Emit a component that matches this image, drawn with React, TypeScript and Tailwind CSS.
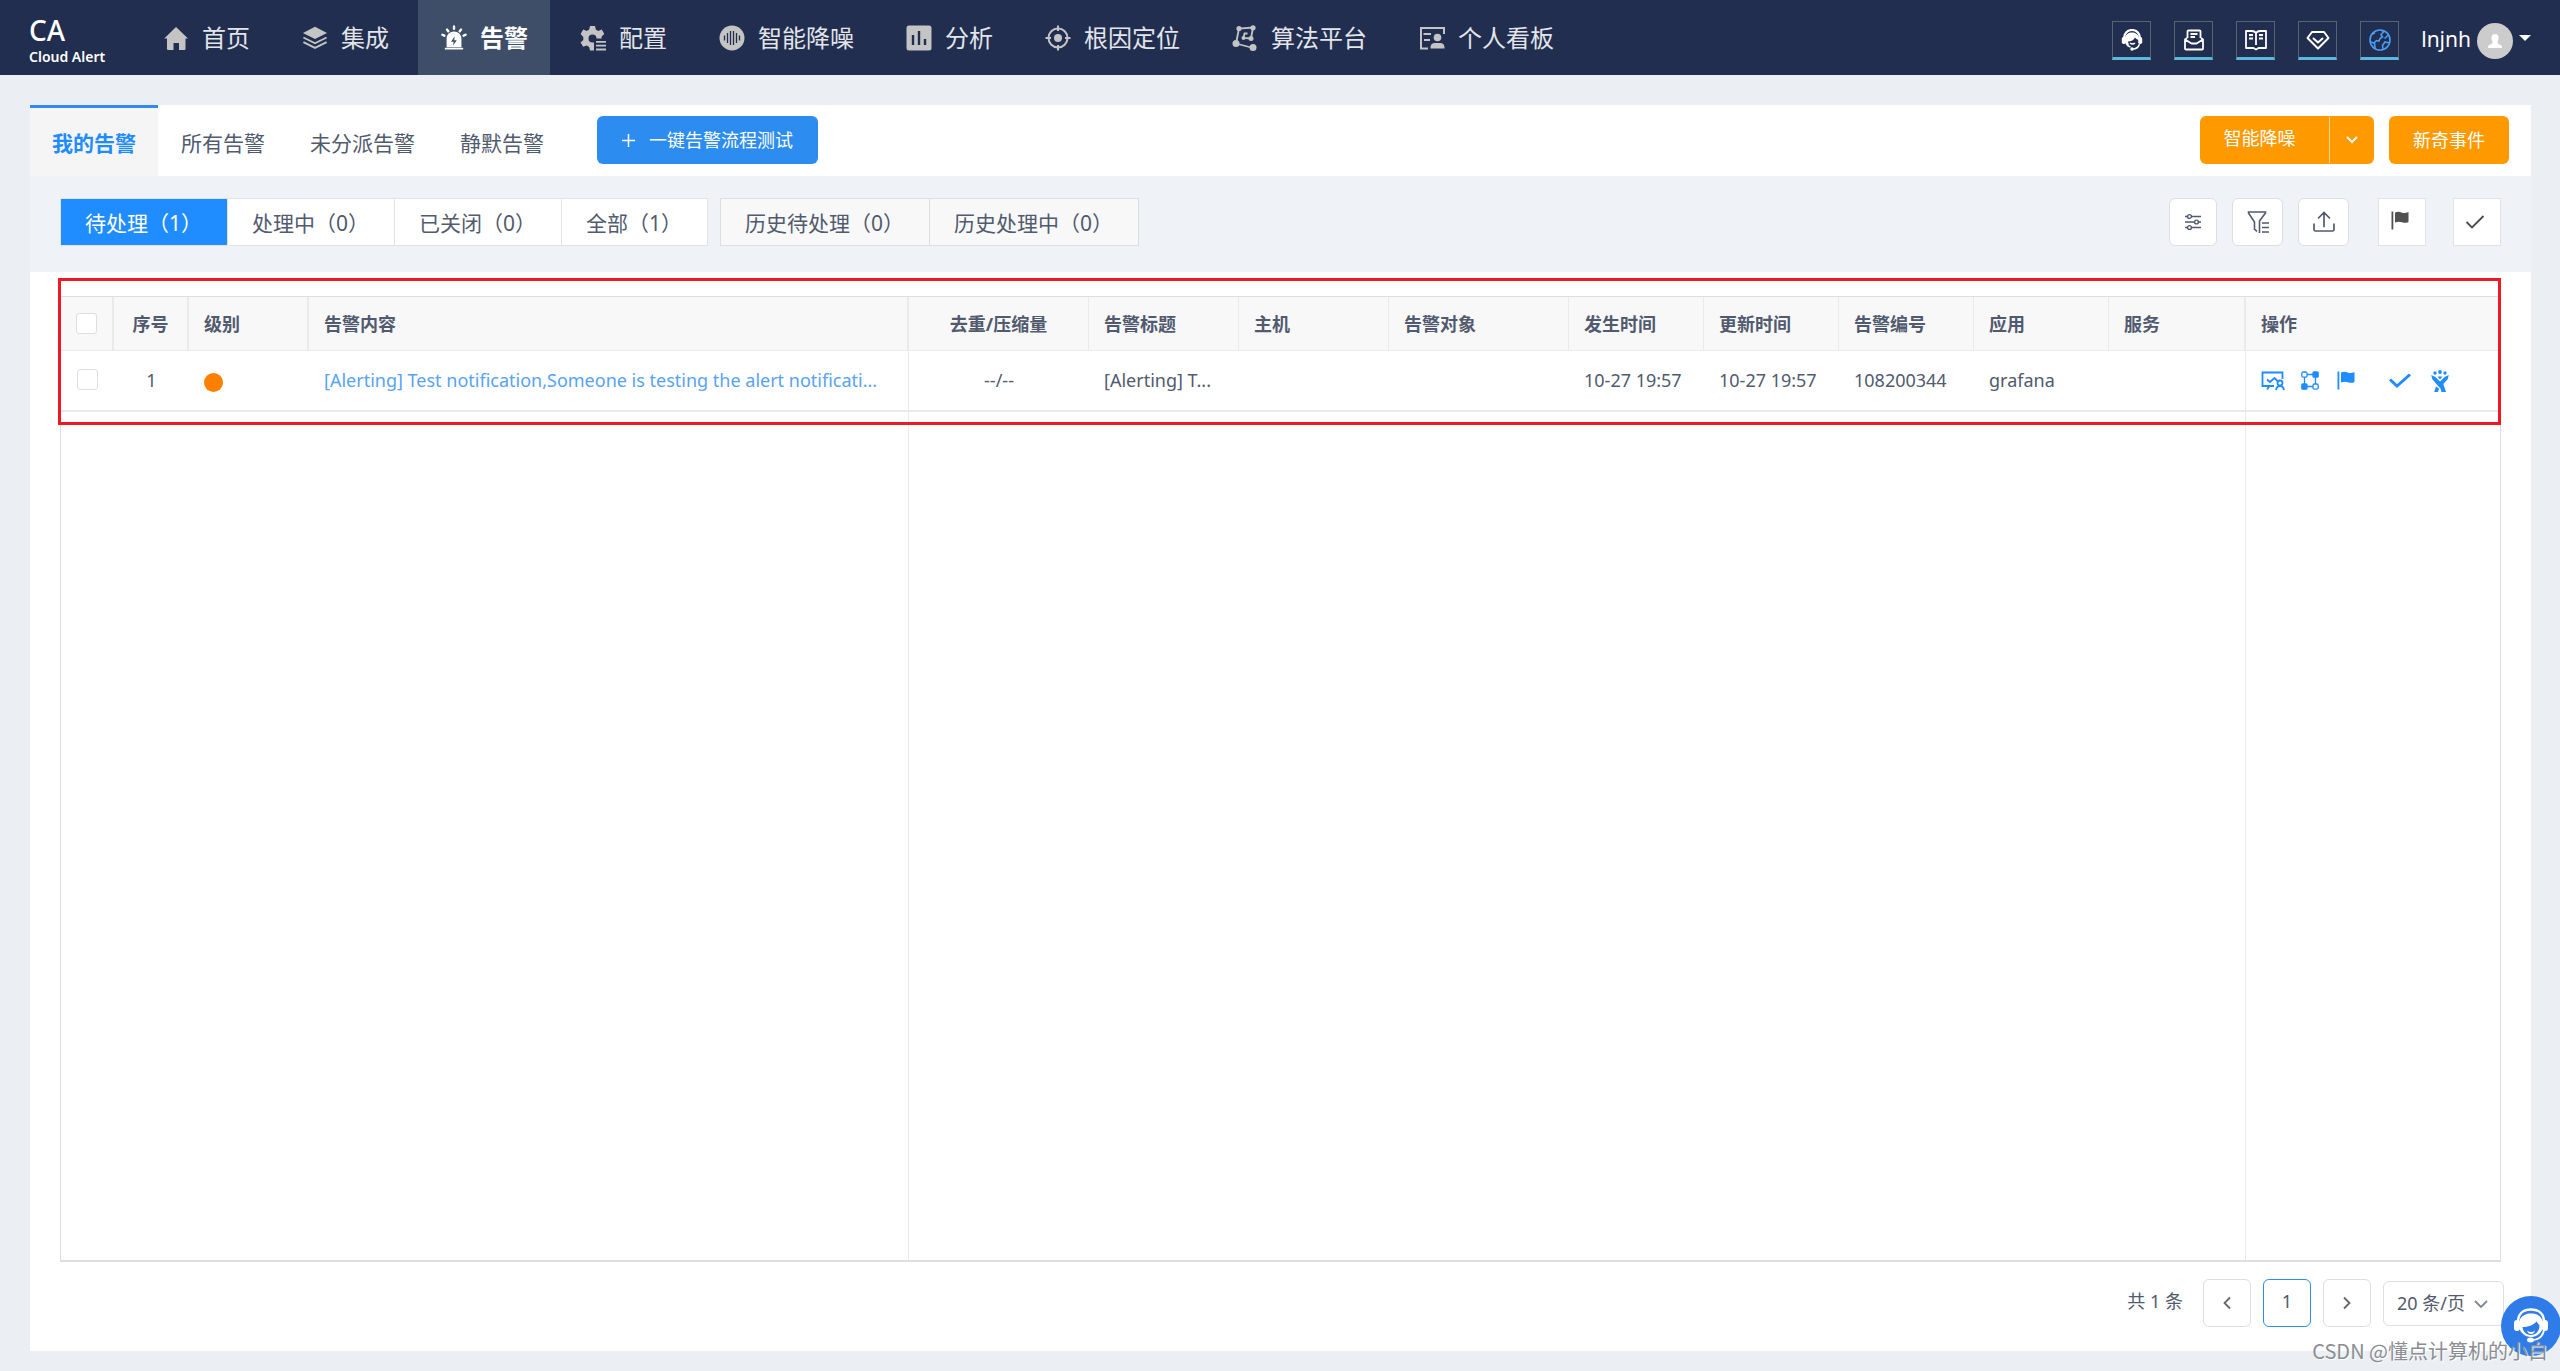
import type { ReactNode } from 'react';

interface NavItem {
  label: string;
  icon: ReactNode;
  active?: boolean;
}

interface Column {
  title: string;
  width: string;
  align?: string;
  border?: string;
}

const navItems: NavItem[] = [
  { label: '首页', icon: <HomeIcon /> },
  { label: '集成', icon: <LayersIcon /> },
  { label: '告警', icon: <SirenIcon />, active: true },
  { label: '配置', icon: <GearIcon /> },
  { label: '智能降噪', icon: <NoiseIcon /> },
  { label: '分析', icon: <ChartIcon /> },
  { label: '根因定位', icon: <TargetIcon /> },
  { label: '算法平台', icon: <AlgorithmIcon /> },
  { label: '个人看板', icon: <BoardIcon /> },
];

const tools = [
  { label: '在线客服', icon: <ServiceIcon /> },
  { label: '消息', icon: <MailIcon /> },
  { label: '文档', icon: <BookIcon /> },
  { label: '会员', icon: <DiamondIcon /> },
  { label: '语言', icon: <GlobeIcon /> },
];

const tabs = ['我的告警', '所有告警', '未分派告警', '静默告警'];
const filters = ['待处理（1）', '处理中（0）', '已关闭（0）', '全部（1）'];
const historyFilters = ['历史待处理（0）', '历史处理中（0）'];

const columns: Column[] = [
  { title: '序号', width: 'w-[75px]', align: 'text-center', border: 'border-r-2' },
  { title: '级别', width: 'w-[120px]', border: 'border-r-2' },
  { title: '告警内容', width: 'w-[600px]', border: 'border-r-2' },
  { title: '去重/压缩量', width: 'w-[180px]', align: 'text-center' },
  { title: '告警标题', width: 'w-[150px]' },
  { title: '主机', width: 'w-[150px]' },
  { title: '告警对象', width: 'w-[180px]' },
  { title: '发生时间', width: 'w-[135px]' },
  { title: '更新时间', width: 'w-[135px]' },
  { title: '告警编号', width: 'w-[135px]' },
  { title: '应用', width: 'w-[135px]' },
  { title: '服务', width: '', border: 'border-r-2' },
  { title: '操作', width: 'w-[254px]', border: 'border-r-0' },
];

/* ---- header icons ---- */

function HomeIcon() {
  return (
    <svg width="26" height="26" viewBox="0 0 26 26" fill="currentColor">
      <path d="M13 2 L25 13.5 H22.5 V24 a1 1 0 0 1-1 1 H16 V18 H10.500 V25 H5 a1 1 0 0 1-1-1 V13.500 H1.200 Z" />
    </svg>
  );
}

function LayersIcon() {
  return (
    <svg width="28" height="26" viewBox="0 0 28 26" fill="none" stroke="currentColor" strokeWidth="2">
      <path d="M14 1 L27 7.500 L14 14 L1 7.500 Z" fill="currentColor" stroke="none" />
      <path d="M1.500 12.500 L14 18.700 L26.500 12.500" />
      <path d="M1.500 17.500 L14 23.700 L26.500 17.500" />
    </svg>
  );
}

function SirenIcon() {
  return (
    <svg width="28" height="28" viewBox="0 0 28 28" fill="none" stroke="currentColor" strokeWidth="2.600" strokeLinecap="round">
      <path d="M6 24 V14.500 a8 7.500 0 0 1 16 0 V24 Z" fill="currentColor" stroke="none" />
      <path d="M5 25.500 H23" strokeWidth="2" />
      <path d="M14 1.500 V4 M6.500 5 L7.800 6.800 M21.500 5 L20.200 6.800 M1.500 10.500 L3.600 11.500 M26.500 10.500 L24.400 11.500" />
      <path d="M14.800 12 L10.800 18 H13.600 L13 22 L17 16.500 H14.200 Z" fill="#3e4e68" stroke="none" />
    </svg>
  );
}

function GearIcon() {
  return (
    <svg width="26" height="26" viewBox="0 0 26 26" fill="currentColor">
      <path
        fillRule="evenodd"
        d="M10 1 h5 l.8 3.600 2.400 1.300 3.500-1.300 2.600 4.300-2.700 2.600 v2 H16.500 a4 4 0 1 0-4 4 H14 V25.500 h-4 l-.8-3.500-2.500-1.400-3.500 1.200-2.600-4.300 2.700-2.500 v-3 L.6 8.900 3.200 4.600 6.800 5.900 9.200 4.600 Z"
      />
      <path d="M16 16 H26 V17.800 H16 Z M16 19.800 H26 V21.600 H16 Z M16 23.600 H26 V25.400 H16 Z" />
    </svg>
  );
}

function NoiseIcon() {
  return (
    <svg width="26" height="26" viewBox="0 0 26 26">
      <circle cx="13" cy="13" r="12.500" fill="currentColor" />
      <path d="M5.500 10.500 V15.500 M8.500 8 V18 M11.500 6 V20 M14.500 6 V20 M17.500 8 V18 M20.500 10.500 V15.500" stroke="#212e4f" strokeWidth="1.300" />
    </svg>
  );
}

function ChartIcon() {
  return (
    <svg width="26" height="26" viewBox="0 0 26 26">
      <rect x="0.500" y="0.500" width="25" height="25" rx="2.500" fill="currentColor" />
      <path d="M7 10 V20 M13 6 V20 M19 14 V20" stroke="#212e4f" strokeWidth="2.400" />
    </svg>
  );
}

function TargetIcon() {
  return (
    <svg width="26" height="26" viewBox="0 0 26 26" fill="none" stroke="currentColor" strokeWidth="2">
      <circle cx="13" cy="13" r="9.500" />
      <circle cx="13" cy="13" r="4" fill="currentColor" stroke="none" />
      <path d="M13 .5 V6 M13 20 V25.500 M.5 13 H6 M20 13 H25.500" />
    </svg>
  );
}

function AlgorithmIcon() {
  return (
    <svg width="26" height="26" viewBox="0 0 26 26" fill="none" stroke="currentColor" strokeWidth="1.800">
      <path d="M4 18.500 L7 3.500 L21 2.500 L19 13.500 L11.500 13 L12.500 8.500 L15.500 8.500 M4 18.500 L21 23" />
      <g fill="currentColor" stroke="none">
        <circle cx="4" cy="18.500" r="3.500" />
        <circle cx="21" cy="22.500" r="3.500" />
        <circle cx="7" cy="3.500" r="2.600" />
        <circle cx="21" cy="2.800" r="2.600" />
        <circle cx="19" cy="13.500" r="2.500" />
        <circle cx="11.500" cy="13" r="2" />
      </g>
    </svg>
  );
}

function BoardIcon() {
  return (
    <svg width="26" height="26" viewBox="0 0 26 26" fill="none" stroke="currentColor" strokeWidth="2">
      <path d="M25 9 V3 H2 V23.500 H9 M4.500 9 H12 M5 15 H11" />
      <circle cx="18.500" cy="12.500" r="3.800" fill="currentColor" stroke="none" />
      <path d="M11.500 23.500 v-1.500 a4.500 4.500 0 0 1 4.500-4 h5 a4.500 4.500 0 0 1 4.500 4 v1.500 Z" fill="currentColor" stroke="none" />
    </svg>
  );
}

function ServiceIcon() {
  return (
    <svg width="22" height="22" viewBox="0 0 22 22" fill="none" stroke="currentColor">
      <path d="M3 9 a8 8 0 0 1 16 0" strokeWidth="2.200" />
      <path d="M3.500 11 C4 5 8 3.500 11 3.500 s7 1.500 7.500 7.500 c-2 0-3.500-1-4.500-2.500 C12.500 11.500 9.500 12.500 7 12.500 L8 16.500 C5 15.500 3.500 13.500 3.500 11 Z" fill="currentColor" stroke="none" />
      <rect x="0.800" y="8" width="4" height="7" rx="1.800" fill="currentColor" stroke="none" />
      <rect x="17.200" y="8" width="4" height="7" rx="1.800" fill="currentColor" stroke="none" />
      <path d="M5 14 a6.500 6.500 0 0 0 4.500 4 M9 14 q2.500 2 5 0 M18.500 15 q-1.500 5-7 5" strokeWidth="1.500" />
      <circle cx="11" cy="20" r="1.700" fill="currentColor" stroke="none" />
    </svg>
  );
}

function MailIcon() {
  return (
    <svg width="22" height="22" viewBox="0 0 22 22" fill="none" stroke="currentColor" strokeWidth="1.800" strokeLinejoin="round">
      <path d="M4.500 9 V2.500 a1 1 0 0 1 1-1 H16.500 a1 1 0 0 1 1 1 V9 M7.500 5 H14.500 M7.500 8 H12" />
      <path d="M4 9 L2 10.500 V19.500 a1 1 0 0 0 1 1 H19 a1 1 0 0 0 1-1 V10.500 L18 9 M2 10.500 L8.500 14.500 H13.500 L20 10.500" />
    </svg>
  );
}

function BookIcon() {
  return (
    <svg width="24" height="22" viewBox="0 0 24 22" fill="none" stroke="currentColor" strokeWidth="1.800" strokeLinejoin="round">
      <path d="M12 4 C11 2.500 9.500 2 8 2 H2 V19 H9.500 L12 20.500 L14.500 19 H22 V2 H16 C14.500 2 13 2.500 12 4 Z M12 4 V16" />
      <path d="M5 6 H9 M5 9.500 H9 M15 6 H19 M15 9.500 H19" />
    </svg>
  );
}

function DiamondIcon() {
  return (
    <svg width="24" height="22" viewBox="0 0 24 22" fill="none" stroke="currentColor" strokeWidth="2" strokeLinejoin="round" strokeLinecap="round">
      <path d="M6 3 H18 L22.500 9 L12 19.500 L1.500 9 Z" />
      <path d="M7.500 9.500 L12 13.500 L16.500 9.500" />
    </svg>
  );
}

function GlobeIcon() {
  return (
    <svg width="22" height="22" viewBox="0 0 22 22" fill="none" stroke="#4a9cf5" strokeWidth="1.600">
      <circle cx="11" cy="11" r="10" />
      <path d="M13 1.500 L14.500 3 L12 5.500 L13.500 8 L11 9.500 L10 12 L7.500 11.500 L5 14 L1.500 13 M3 5 L6 4 M19.500 6 L15.500 9.500 M20.500 14 L16 13 L13.500 16.500 L14 20 M5.500 14 L6 19" />
    </svg>
  );
}

/* ---- toolbar icons ---- */

function SlidersIcon() {
  return (
    <svg width="18" height="18" viewBox="0 0 18 18" fill="none" stroke="#515a6e" strokeWidth="1.400">
      <path d="M1 3.500 H3.500 M7.500 3.500 H17 M1 9 H10.500 M14.500 9 H17 M1 14.500 H3.500 M7.500 14.500 H17" />
      <circle cx="5.500" cy="3.500" r="1.900" />
      <circle cx="12.500" cy="9" r="1.900" />
      <circle cx="5.500" cy="14.500" r="1.900" />
    </svg>
  );
}

function FilterIcon() {
  return (
    <svg width="24" height="24" viewBox="0 0 24 24" fill="none" stroke="#515a6e" strokeWidth="1.600">
      <path d="M8.500 20 V12 L2.500 3 V2 H19.500 V3 L13.500 11 V23 M8 18.500 L11 21.500 M16 13 H23 M16 17.500 H23 M16 22 H23" />
    </svg>
  );
}

function ExportIcon() {
  return (
    <svg width="24" height="22" viewBox="0 0 24 22" fill="none" stroke="#515a6e" strokeWidth="1.700" strokeLinecap="round">
      <path d="M12 15.500 V2 M6.500 7 L12 1.500 L17.500 7 M2 13 V18.500 a1.500 1.500 0 0 0 1.500 1.500 H20.500 a1.500 1.500 0 0 0 1.500-1.500 V13" />
    </svg>
  );
}

function FlagIcon({ color }: { color: string }) {
  return (
    <svg width="18" height="19" viewBox="0 0 18 19" fill={color}>
      <rect x="0.500" y="0.500" width="1.800" height="18" />
      <path d="M4 1.500 C7 .3 9 1 11 1.700 S15.500 2 17.500 1 V11 C15 12.300 13 11.800 11 11.200 S7 10.200 4 11.500 Z" />
    </svg>
  );
}

function CheckIcon({ color, thick }: { color: string; thick?: boolean }) {
  return (
    <svg width="22" height="16" viewBox="0 0 22 16" fill="none" stroke={color} strokeWidth={thick ? 3 : 1.8}>
      <path d={thick ? 'M1 6.500 L8 13 L21 1.500' : 'M2.500 8 L8 13.500 L19.500 2'} />
    </svg>
  );
}

function Chevron({ path, color }: { path: string; color: string }) {
  return (
    <svg width="14" height="14" viewBox="0 0 14 14" fill="none" stroke={color} strokeWidth="1.800">
      <path d={path} />
    </svg>
  );
}

/* ---- row action icons ---- */

function AssignIcon() {
  return (
    <svg width="24" height="20" viewBox="0 0 24 20" fill="none" stroke="#1f8cff" strokeWidth="1.800">
      <path d="M13 15 H1.500 V1.500 H21.500 V8 M8.500 15 L6 18.500 M6 8.500 L9 11 L13.500 7 L16.500 10" />
      <circle cx="19" cy="12" r="2.500" />
      <path d="M15 19 C15.500 16 17 15 19 15 s3.500 1 4 4" />
    </svg>
  );
}

function TopologyIcon() {
  return (
    <svg width="18" height="19" viewBox="0 0 18 19" fill="none" stroke="#1f8cff" strokeWidth="1.300">
      <path d="M6 3.500 H12 M3.500 6 V13 M14.500 6 V13 M6 15.500 H12" />
      <rect x="0.800" y="1" width="5.200" height="5.200" rx="1.500" />
      <rect x="12" y="1" width="5.200" height="5.200" rx="1" fill="#1f8cff" />
      <rect x="0.800" y="13" width="5.200" height="5.200" rx="1" fill="#1f8cff" />
      <rect x="12" y="13" width="5.200" height="5.200" rx="1.500" />
    </svg>
  );
}

function TeamIcon() {
  return (
    <svg width="18" height="22" viewBox="0 0 18 22" fill="#1f8cff">
      <circle cx="9" cy="2" r="1.900" />
      <circle cx="4" cy="3" r="1.700" />
      <circle cx="14" cy="3" r="1.700" />
      <path d="M6.500 6.500 H11.500 L9 9.500 Z" />
      <path d="M.3 5 L4.500 7 L9 11.500 L13.500 7 L17.700 5 L16.800 9 L12.300 14 L15 22 H10.500 L9.500 18.500 L5 13.500 L1.200 9 Z" />
      <path d="M5 16.500 L8 18.500 L7 22 H3.200 Z" />
    </svg>
  );
}

function AgentIcon() {
  return (
    <svg width="34" height="36" viewBox="0 0 34 36" fill="none" stroke="white">
      <path d="M4 14 C4 5 10 1.500 17 1.500 S30 5 30 14" strokeWidth="2.500" />
      <rect x="0" y="12" width="6" height="11" rx="3" fill="white" stroke="none" />
      <rect x="28" y="12" width="6" height="11" rx="3" fill="white" stroke="none" />
      <path d="M5 15 C6 8 11 5.500 17 5.500 S28 8 29 15 C30 24 23 29 17 29 S4 24 5 15 Z" fill="white" stroke="none" />
      <path d="M8.500 19 C14 19 19 17.500 22.500 13.500 L25.500 17.500 C25.500 24 21 27 17 27 S9 24.500 8.500 19 Z" fill="#2f7be8" stroke="none" />
      <path d="M13 22.500 q4 3 8 0 q-1 3.500-4 3.500 t-4-3.500 Z" fill="white" stroke="none" />
      <path d="M30 22 C29 28 25 31.500 18 32" strokeWidth="1.800" />
      <ellipse cx="16.500" cy="32" rx="3.500" ry="2.500" fill="white" stroke="none" />
    </svg>
  );
}

function Checkbox({ label }: { label: string }) {
  return (
    <input
      type="checkbox"
      aria-label={label}
      className="block size-[21px] mx-auto appearance-none rounded-[3px] border border-[#dcdee2] bg-white"
    />
  );
}

function Header() {
  return (
    <header className="flex h-[75px] items-stretch bg-[#212e4f] text-white">
      <div className="w-[140px] shrink-0 pl-[29px] pt-3">
        <div className="text-[28px] font-medium leading-9">CA</div>
        <div className="text-[14px] font-semibold leading-[18px]">Cloud Alert</div>
      </div>

      <nav className="flex gap-[7px]">
        {navItems.map((item) => (
          <a
            key={item.label}
            href="#"
            className={`flex items-center gap-[13px] pr-[22px] pl-[23px] text-2xl whitespace-nowrap ${
              item.active ? 'bg-[#3e4e68] font-bold text-white' : 'text-[#e3e5e9]'
            }`}
          >
            <span className={`flex w-[26px] justify-center ${item.active ? 'text-white' : 'text-[#c4c4c4]'}`}>
              {item.icon}
            </span>
            <span className="leading-9">{item.label}</span>
          </a>
        ))}
      </nav>

      <div className="ml-auto flex items-center pt-[6px] pr-[29px]">
        <div className="flex gap-[23px]">
          {tools.map((tool) => (
            <button
              key={tool.label}
              aria-label={tool.label}
              className="flex size-[39px] items-center justify-center border border-b-[3px] border-[#5b6371] border-b-[#5bb8dc]"
            >
              {tool.icon}
            </button>
          ))}
        </div>
        <button className="ml-[22px] flex items-center gap-[6px] text-[21px] leading-8">
          <span className="pb-[3px]">lnjnh</span>
          <span className="flex size-9 items-center justify-center rounded-full bg-[#ccc]">
            <svg width="14" height="14" viewBox="0 0 14 14" fill="white">
              <path d="M7 0 a3.500 3.700 0 0 1 3.500 3.700 C10.500 6 9.500 7 9.500 8.500 C9.500 10.500 14 10.500 14 13 V14 H0 V13 C0 10.500 4.500 10.500 4.500 8.500 C4.500 7 3.500 6 3.500 3.700 A3.500 3.700 0 0 1 7 0 Z" />
            </svg>
          </span>
          <svg width="12" height="12" viewBox="0 0 12 12" fill="white">
            <path d="M0 0 H12 L6 6 Z" />
          </svg>
        </button>
      </div>
    </header>
  );
}

function TabBar() {
  return (
    <div className="flex h-[71px] items-stretch pr-[22px]">
      <div className="flex gap-px">
        {tabs.map((tab, index) => (
          <button
            key={tab}
            className={`border-t-[3px] px-[22px] pt-1 text-[21px] whitespace-nowrap ${
              index === 0
                ? 'border-[#2d8cf0] bg-[#f5f5f5] font-bold text-[#1f8cff]'
                : 'border-transparent text-[#515a6e]'
            }`}
          >
            {tab}
          </button>
        ))}
      </div>

      <button className="mt-[11px] ml-[31px] flex h-12 items-center gap-[14px] rounded-md bg-[#2d8cf0] px-[25px] text-lg whitespace-nowrap text-white">
        <svg width="13" height="13" viewBox="0 0 13 13" stroke="white" strokeWidth="1.500">
          <path d="M6.500 0 V13 M0 6.500 H13" />
        </svg>
        一键告警流程测试
      </button>

      <div className="mt-[11px] ml-auto flex items-start gap-[15px] text-lg whitespace-nowrap text-white">
        <div className="flex h-12 items-center rounded-md bg-[#ff9900]">
          <button className="w-[129px] pr-[10px] pb-1">智能降噪</button>
          <button aria-label="更多" className="flex h-[46px] w-[45px] items-center justify-center border-l border-[#ffd699]">
            <svg width="12" height="8" viewBox="0 0 12 8" fill="none" stroke="white" strokeWidth="2">
              <path d="M1 1 L6 6 L11 1" />
            </svg>
          </button>
        </div>
        <button className="h-12 w-[120px] rounded-md bg-[#ff9900]">新奇事件</button>
      </div>
    </div>
  );
}

function Toolbar() {
  return (
    <div className="flex h-24 items-center bg-[#eff3f8] px-[30px] pb-1 text-[21px] whitespace-nowrap text-[#515a6e]">
      <div className="flex h-12 divide-x divide-[#e1e3e6] border border-[#e1e3e6] bg-white">
        {filters.map((filter, index) => (
          <button key={filter} className={`pt-1 pr-[25px] pl-6 ${index === 0 ? 'bg-[#1f8cff] text-white' : ''}`}>
            {filter}
          </button>
        ))}
      </div>
      <div className="ml-3 flex h-12 divide-x divide-[#dcdee2] border border-[#dcdee2] bg-[#f8f8f9]">
        {historyFilters.map((filter) => (
          <button key={filter} className="pt-1 pr-[25px] pl-6">
            {filter}
          </button>
        ))}
      </div>

      <div className="ml-auto flex items-center gap-[15px]">
        <button aria-label="列设置" className="flex h-12 w-12 items-center justify-center rounded-md border border-[#dcdee2] bg-white">
          <SlidersIcon />
        </button>
        <button aria-label="筛选" className="flex h-12 w-[51px] items-center justify-center rounded-md border border-[#dcdee2] bg-white">
          <FilterIcon />
        </button>
        <button aria-label="导出" className="flex h-12 w-[51px] items-center justify-center rounded-md border border-[#dcdee2] bg-white">
          <ExportIcon />
        </button>
        <div className="ml-[14px] flex gap-[27px]">
          <button aria-label="认领" className="flex h-12 w-12 items-start justify-center border border-[#e1e3e6] bg-white pt-3 pr-1">
            <FlagIcon color="#515151" />
          </button>
          <button aria-label="关闭" className="flex h-12 w-12 items-center justify-center border border-[#e1e3e6] bg-white pr-1">
            <CheckIcon color="#4a4a4a" />
          </button>
        </div>
      </div>
    </div>
  );
}

function AlertTable() {
  return (
    <div className="relative flex flex-1 flex-col border border-b-2 border-[#dcdee2]">
      <table className="w-full table-fixed border-separate border-spacing-0 text-lg whitespace-nowrap text-[#515a6e]">
        <thead>
          <tr className="h-[54px] bg-[#f8f8f9]">
            <th className="w-[53px] border-r-2 border-b border-[#e8eaec]">
              <Checkbox label="全选" />
            </th>
            {columns.map((column) => (
              <th
                key={column.title}
                className={`border-b border-[#e8eaec] px-[15px] font-bold ${column.width} ${column.align ?? 'text-left'} ${column.border ?? 'border-r'}`}
              >
                {column.title}
              </th>
            ))}
          </tr>
        </thead>
        <tbody>
          <tr className="h-[61px] *:border-b-2 *:border-[#e8eaec] *:px-[15px] *:pb-[2px]">
            <td>
              <Checkbox label="选择告警 108200344" />
            </td>
            <td className="text-center">1</td>
            <td>
              <div className="mt-[6px] size-[19px] rounded-full bg-[#ff7f00]" />
            </td>
            <td className="border-r">
              <a href="#" className="text-[#57a3f3]">
                [Alerting] Test notification,Someone is testing the alert notificati...
              </a>
            </td>
            <td className="text-center">--/--</td>
            <td>[Alerting] T...</td>
            <td></td>
            <td></td>
            <td>10-27 19:57</td>
            <td>10-27 19:57</td>
            <td>108200344</td>
            <td>grafana</td>
            <td className="border-r"></td>
            <td>
              <div className="flex items-center pt-[2px]">
                <button aria-label="分派"><AssignIcon /></button>
                <button aria-label="拓扑" className="ml-4"><TopologyIcon /></button>
                <button aria-label="认领" className="ml-[18px]"><FlagIcon color="#1f8cff" /></button>
                <button aria-label="关闭" className="ml-[34px]"><CheckIcon color="#1f8cff" thick /></button>
                <button aria-label="协作" className="ml-5"><TeamIcon /></button>
              </div>
            </td>
          </tr>
        </tbody>
      </table>

      {/* Column lines run on to the bottom of the empty area */}
      <div className="flex flex-1">
        <div className="w-[848px] shrink-0 border-r border-[#e8eaec]" />
        <div className="flex-1" />
        <div className="w-[255px] shrink-0 border-l border-[#e8eaec]" />
      </div>

      <div className="pointer-events-none absolute -top-[19px] -right-px -left-[3px] h-[147px] border-[3px] border-[#f01923]" />
    </div>
  );
}

function Pagination() {
  return (
    <div className="-mr-[3px] flex items-center justify-end pt-[17px] pb-6 text-lg text-[#515a6e]">
      <span className="mr-5 pb-1">共 1 条</span>
      <div className="flex gap-3">
        <button aria-label="上一页" className="flex size-12 items-center justify-center rounded-md border border-[#dcdee2]">
          <Chevron path="M10 1.500 L4.500 7 L10 12.500" color="#666" />
        </button>
        <button className="size-12 rounded-md border border-[#2d8cf0] pb-1">1</button>
        <button aria-label="下一页" className="flex size-12 items-center justify-center rounded-md border border-[#dcdee2]">
          <Chevron path="M4 1.500 L9.500 7 L4 12.500" color="#666" />
        </button>
      </div>
      <div className="relative ml-3">
        <select
          aria-label="每页条数"
          className="h-[45px] w-[121px] appearance-none rounded-md border border-[#dcdee2] bg-white pl-[13px]"
        >
          <option>20 条/页</option>
        </select>
        <span className="pointer-events-none absolute top-4 right-4">
          <Chevron path="M1 4 L7 10 L13 4" color="#808695" />
        </span>
      </div>
    </div>
  );
}

export default function App() {
  return (
    <div className="relative flex min-h-screen flex-col overflow-hidden bg-[#ebeef3] font-['Noto_Sans','Noto_Sans_CJK_SC',sans-serif]">
      <Header />
      <main className="mt-[30px] mr-[29px] mb-5 ml-[30px] flex flex-1 flex-col bg-white">
        <TabBar />
        <Toolbar />
        <section className="flex flex-1 flex-col px-[30px] pt-6">
          <AlertTable />
          <Pagination />
        </section>
      </main>

      <button
        aria-label="在线咨询"
        className="absolute -right-px bottom-[15px] flex size-[60px] items-center justify-center rounded-full bg-[#2f7be8]"
      >
        <AgentIcon />
      </button>
      <div className="pointer-events-none absolute right-3 bottom-1 font-['Noto_Sans_CJK_SC',sans-serif] text-xl leading-8 text-[#8a8d92] [text-shadow:1px_1px_1px_#fff]">
        CSDN @懂点计算机的小白
      </div>
    </div>
  );
}
